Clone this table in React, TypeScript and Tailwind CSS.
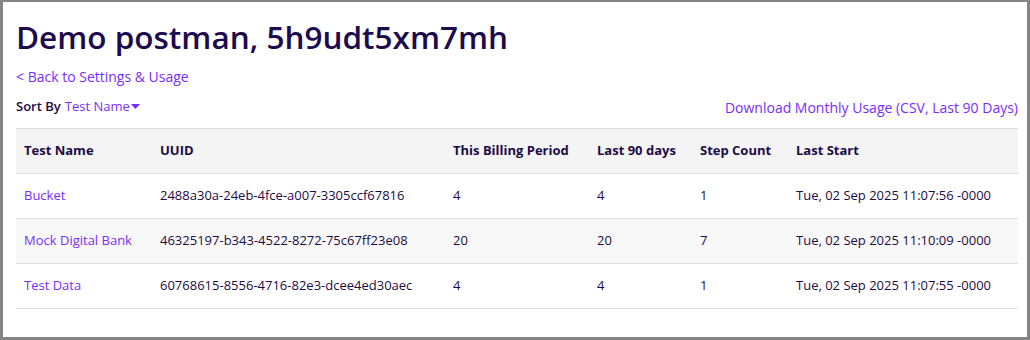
import { ReactNode } from "react"

type UsageRow = {
  name: string
  uuid: string
  billing: number
  last90: number
  steps: number
  lastStart: string
}

const rows: UsageRow[] = [
  { name: "Bucket", uuid: "2488a30a-24eb-4fce-a007-3305ccf67816", billing: 4, last90: 4, steps: 1, lastStart: "Tue, 02 Sep 2025 11:07:56 -0000" },
  { name: "Mock Digital Bank", uuid: "46325197-b343-4522-8272-75c67ff23e08", billing: 20, last90: 20, steps: 7, lastStart: "Tue, 02 Sep 2025 11:10:09 -0000" },
  { name: "Test Data", uuid: "60768615-8556-4716-82e3-dcee4ed30aec", billing: 4, last90: 4, steps: 1, lastStart: "Tue, 02 Sep 2025 11:07:55 -0000" },
]

function Th({ children, className = "" }: { children: ReactNode; className?: string }) {
  return <th className={`px-2 text-left font-bold text-[13px] text-[#1d0b45] ${className}`}>{children}</th>
}

export default function App() {
  return (
    <div
      className="h-[340px] w-[1030px] bg-white border-[#858585] border-t-2 border-l-[3px] border-r-[3px] border-b-[3px] overflow-hidden"
      style={{ fontFamily: '"Open Sans", "Liberation Sans", sans-serif' }}
    >
      <div className="pl-[13px] pr-[9px]">
        <h1 className="mt-[15px] text-[31.5px] leading-[40px] font-semibold text-[#1c0b4d]">
          Demo postman, 5h9udt5xm7mh
        </h1>
        <a href="#" className="block mt-[10px] text-[14px] leading-[20px] text-[#7a2cff]">
          &lt; Back to Settings &amp; Usage
        </a>
        {/* sort + csv download */}
        <div className="mt-[10px] flex items-center justify-between h-[20px]">
          <div className="flex items-center text-[13px]">
            <span className="font-semibold text-[#1d0b45]">Sort By</span>
            <button className="ml-[4px] flex items-center text-[#7a2cff]">
              Test Name
              <svg width="9" height="6" viewBox="0 0 9 6" className="ml-[1px]">
                <path d="M0 0h9L4.5 5z" fill="#7a2cff" />
              </svg>
            </button>
          </div>
          <a href="#" className="text-[14px] text-[#7a2cff]">
            Download Monthly Usage (CSV, Last 90 Days)
          </a>
        </div>
        <table className="mt-[11px] w-[1002px] border-collapse table-fixed">
          <thead>
            <tr className="h-[45px] bg-[#f4f4f4] border-t border-b border-[#dedede]">
              <Th className="w-[136px]">Test Name</Th>
              <Th className="w-[293px]">UUID</Th>
              <Th className="w-[144px]">This Billing Period</Th>
              <Th className="w-[103px]">Last 90 days</Th>
              <Th className="w-[96px]">Step Count</Th>
              <Th>Last Start</Th>
            </tr>
          </thead>
          <tbody className="text-[13px] text-[#1d0b45]">
            {rows.map((r, i) => (
              <tr key={r.uuid} className={`h-[45px] border-b border-[#dedede] ${i % 2 === 1 ? "bg-[#f8f8f8]" : "bg-white"}`}>
                <td className="px-2">
                  <a href="#" className="text-[#7a2cff]">{r.name}</a>
                </td>
                <td className="px-2">{r.uuid}</td>
                <td className="px-2">{r.billing}</td>
                <td className="px-2">{r.last90}</td>
                <td className="px-2">{r.steps}</td>
                <td className="px-2">{r.lastStart}</td>
              </tr>
            ))}
          </tbody>
        </table>
      </div>
    </div>
  )
}
